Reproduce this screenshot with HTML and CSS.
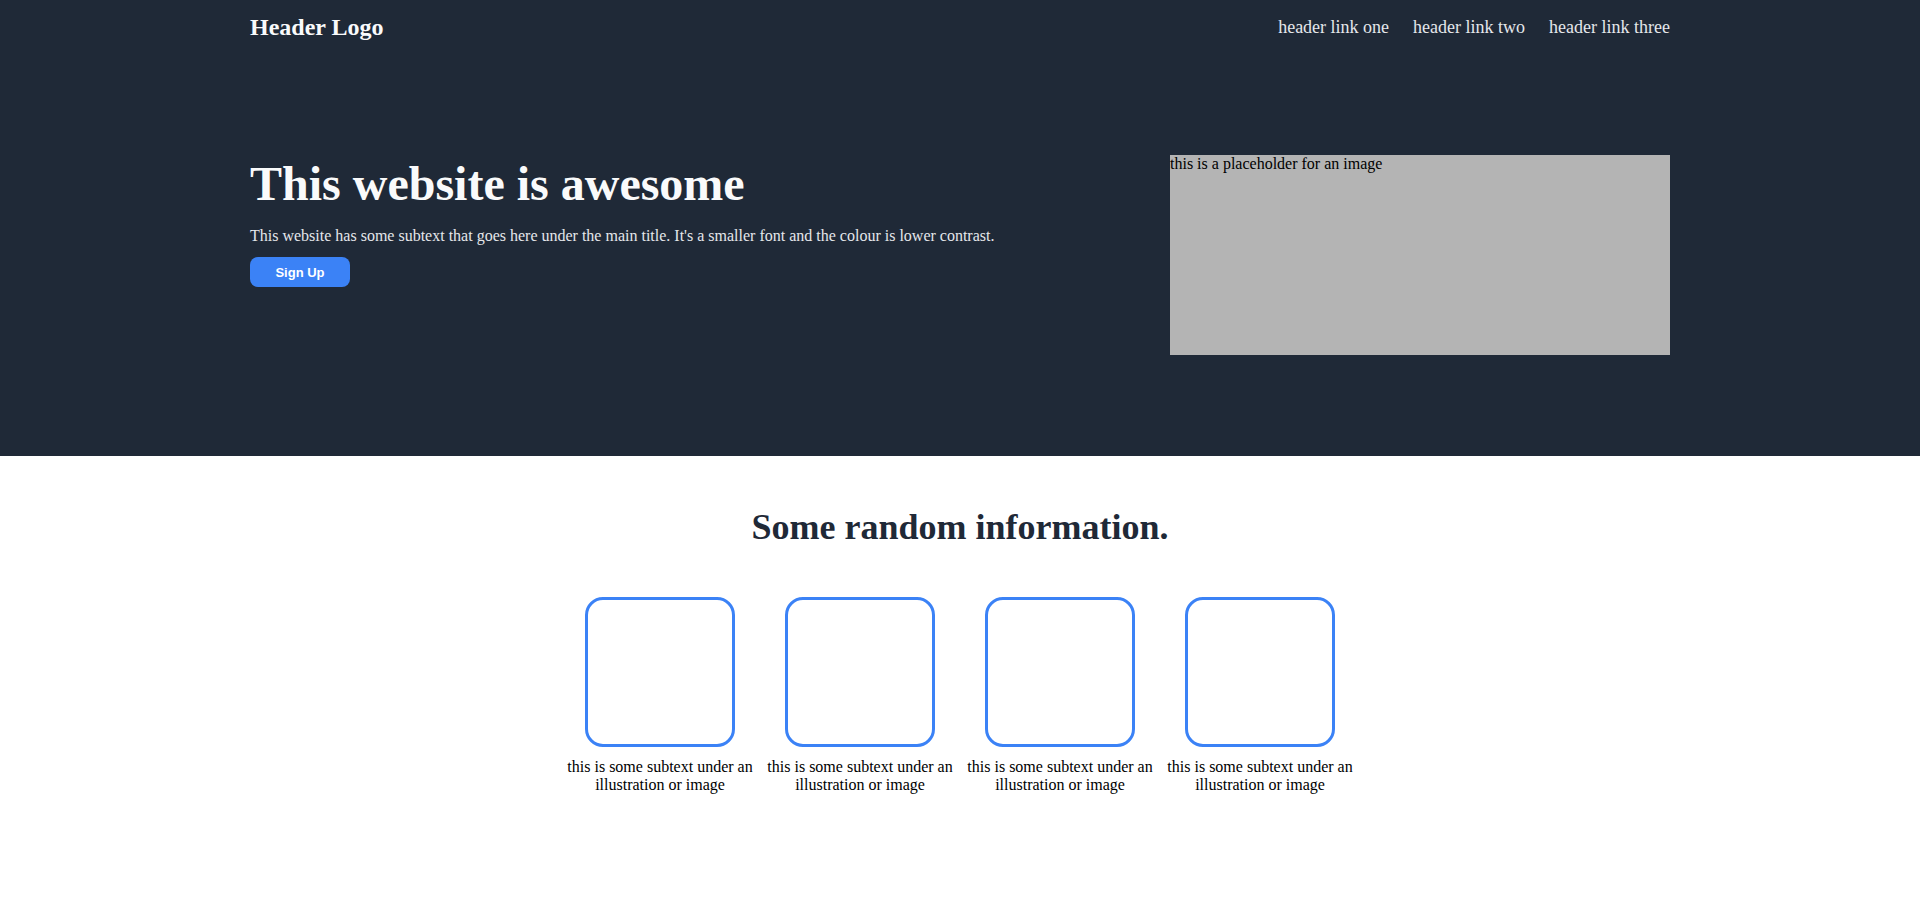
FILE: index.html
```html
<!DOCTYPE html>
<html lang="en">
<head>
<meta charset="utf-8">
<title>Landing</title>
<link rel="stylesheet" href="styles.css">
</head>
<body>
<div class="hero-area">
  <header class="header container">
    <div class="logo">Header Logo</div>
    <nav class="nav">
      <a class="nav-link" href="#">header link one</a>
      <a class="nav-link" href="#">header link two</a>
      <a class="nav-link" href="#">header link three</a>
    </nav>
  </header>
  <section class="hero container">
    <div class="hero-text">
      <h1 class="hero-title">This website is awesome</h1>
      <p class="hero-sub">This website has some subtext that goes here under the main title. It's a smaller font and the colour is lower contrast.</p>
      <button class="btn">Sign Up</button>
    </div>
    <div class="hero-image">this is a placeholder for an image</div>
  </section>
</div>
<section class="info">
  <h2 class="info-title">Some random information.</h2>
  <div class="cards">
    <div class="card"><div class="card-box"></div><p class="card-text">this is some subtext under an illustration or image</p></div>
    <div class="card"><div class="card-box"></div><p class="card-text">this is some subtext under an illustration or image</p></div>
    <div class="card"><div class="card-box"></div><p class="card-text">this is some subtext under an illustration or image</p></div>
    <div class="card"><div class="card-box"></div><p class="card-text">this is some subtext under an illustration or image</p></div>
  </div>
</section>
</body>
</html>
```

FILE: styles.css
```css
* { box-sizing: border-box; }
body {
  margin: 0;
  font-family: "Liberation Serif", "Times New Roman", serif;
  background: #ffffff;
  color: #000;
}
.container {
  max-width: 1420px;
  margin: 0 auto;
}
.hero-area {
  background: #1f2937;
  padding-bottom: 101px;
}
.header {
  display: flex;
  justify-content: space-between;
  align-items: center;
  padding: 14px 0 13px;
}
.logo {
  font-size: 24px;
  font-weight: bold;
  color: #f9fafb;
}
.nav {
  display: flex;
  gap: 24px;
}
.nav-link {
  font-size: 18px;
  color: #e5e7eb;
  text-decoration: none;
}
.hero {
  display: flex;
  justify-content: space-between;
  align-items: flex-start;
  padding-top: 101px;
}
.hero-text {
  padding-top: 1px;
}
.hero-title {
  margin: 0;
  font-size: 48px;
  font-weight: bold;
  color: #f9fafb;
}
.hero-sub {
  margin: 16px 0 12px;
  font-size: 16px;
  color: #e5e7eb;
}
.btn {
  width: 100px;
  height: 30px;
  padding: 0;
  border: none;
  border-radius: 8px;
  background: #3b82f6;
  color: #fff;
  font-family: "Liberation Sans", Arial, sans-serif;
  font-size: 13px;
  font-weight: bold;
}
.hero-image {
  width: 500px;
  height: 200px;
  background: #b4b4b4;
  font-size: 16px;
  color: #000;
}
.info {
  padding-top: 50px;
}
.info-title {
  margin: 0;
  text-align: center;
  font-size: 36px;
  font-weight: bold;
  color: #1f2937;
}
.cards {
  display: flex;
  justify-content: center;
  margin-top: 49px;
}
.card {
  width: 200px;
  display: flex;
  flex-direction: column;
  align-items: center;
}
.card-box {
  width: 150px;
  height: 150px;
  border: 3px solid #3b82f6;
  border-radius: 18px;
}
.card-text {
  margin: 11px 0 0;
  font-size: 16px;
  text-align: center;
}
```
